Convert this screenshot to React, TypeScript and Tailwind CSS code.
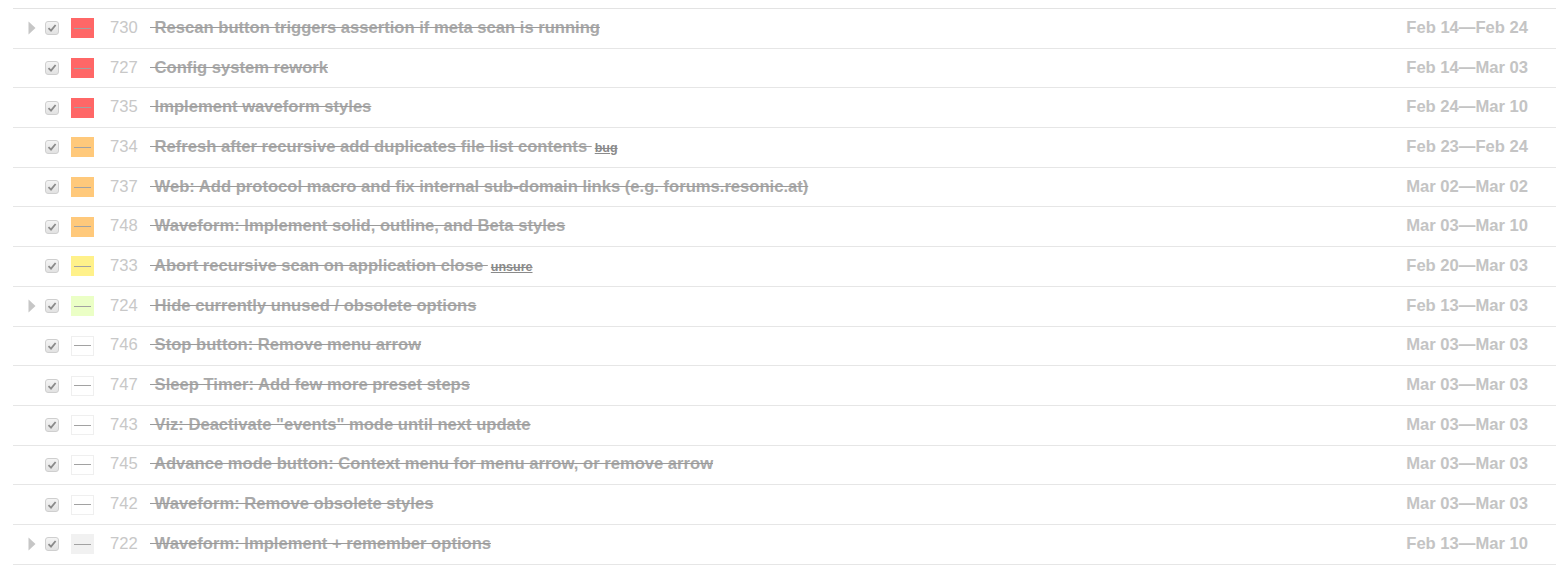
import React from "react";

type Row = {
  arrow: boolean;
  color: string;
  id: number;
  title: string;
  tag?: string;
  date: string;
};

const rows: Row[] = [
  { arrow: true, color: "red", id: 730, title: "Rescan button triggers assertion if meta scan is running", date: "Feb 14\u2014Feb 24" },
  { arrow: false, color: "red", id: 727, title: "Config system rework", date: "Feb 14\u2014Mar 03" },
  { arrow: false, color: "red", id: 735, title: "Implement waveform styles", date: "Feb 24\u2014Mar 10" },
  { arrow: false, color: "orange", id: 734, title: "Refresh after recursive add duplicates file list contents", tag: "bug", date: "Feb 23\u2014Feb 24" },
  { arrow: false, color: "orange", id: 737, title: "Web: Add protocol macro and fix internal sub-domain links (e.g. forums.resonic.at)", date: "Mar 02\u2014Mar 02" },
  { arrow: false, color: "orange", id: 748, title: "Waveform: Implement solid, outline, and Beta styles", date: "Mar 03\u2014Mar 10" },
  { arrow: false, color: "yellow", id: 733, title: "Abort recursive scan on application close", tag: "unsure", date: "Feb 20\u2014Mar 03" },
  { arrow: true, color: "green", id: 724, title: "Hide currently unused / obsolete options", date: "Feb 13\u2014Mar 03" },
  { arrow: false, color: "white", id: 746, title: "Stop button: Remove menu arrow", date: "Mar 03\u2014Mar 03" },
  { arrow: false, color: "white", id: 747, title: "Sleep Timer: Add few more preset steps", date: "Mar 03\u2014Mar 03" },
  { arrow: false, color: "white", id: 743, title: "Viz: Deactivate \"events\" mode until next update", date: "Mar 03\u2014Mar 03" },
  { arrow: false, color: "white", id: 745, title: "Advance mode button: Context menu for menu arrow, or remove arrow", date: "Mar 03\u2014Mar 03" },
  { arrow: false, color: "white", id: 742, title: "Waveform: Remove obsolete styles", date: "Mar 03\u2014Mar 03" },
  { arrow: true, color: "gray", id: 722, title: "Waveform: Implement + remember options", date: "Feb 13\u2014Mar 10" },
];

function ColorBox({ color }: { color: string }) {
  let cls = "";
  if (color === "red") cls = "bg-[#ff6767]";
  else if (color === "orange") cls = "bg-[#ffc97b]";
  else if (color === "yellow") cls = "bg-[#fff18a]";
  else if (color === "green") cls = "bg-[#ebffc6]";
  else if (color === "white") cls = "bg-white border border-[#efefef]";
  else cls = "bg-[#f1f1f1]";
  return (
    <div className={`ml-[12px] flex h-[20px] w-[23px] shrink-0 items-center justify-center ${cls}`}>
      <div className="h-px w-[17px] bg-[#a2a2a2]" />
    </div>
  );
}

function Check() {
  return (
    <div className="flex h-[14px] w-[14px] shrink-0 items-center justify-center rounded-[3px] border border-[#cfcfcf] bg-gradient-to-b from-[#f4f4f4] to-[#e2e2e2]">
      <svg width="10" height="10" viewBox="0 0 10 10">
        <path d="M1.5 5.2 L4 7.6 L8.6 2" fill="none" stroke="#8a8a8a" strokeWidth="1.8" />
      </svg>
    </div>
  );
}

function Arrow() {
  return (
    <svg width="8" height="14" viewBox="0 0 8 14">
      <path d="M0.5 0.5 L7.5 7 L0.5 13.5 Z" fill="#c6c6c6" />
    </svg>
  );
}

export default function App() {
  return (
    <div className="min-h-[577px] bg-white font-['Liberation_Sans',Arial,sans-serif]">
      <div className="pt-[8px] pl-[13px]">
        <div className="w-[1543px] border-t border-[#e3e3e3]">
          {rows.map((r) => (
            <div
              key={r.id}
              className="flex h-[39.7px] items-center border-b border-[#e6e6e6] pl-[15px] pr-[28px]"
            >
              <div className="flex w-[17px] shrink-0 items-center">{r.arrow && <Arrow />}</div>
              <Check />
              <ColorBox color={r.color} />
              <div className="ml-[16px] w-[40px] shrink-0 text-[16.6px] text-[#c8c8c8]">{r.id}</div>
              <div className="flex min-w-0 flex-1 items-baseline whitespace-pre text-[16.6px]">
                <span className="font-bold text-[#a9a9a9] line-through decoration-[#9a9a9a]">{" " + r.title + (r.tag ? " " : "")}</span>
                {r.tag && (
                  <span className="ml-[3px] text-[12.5px] font-bold text-[#8a8a8a] [text-decoration-line:underline_line-through]">{r.tag}</span>
                )}
              </div>
              <div className="shrink-0 text-[16.6px] font-bold text-[#c4c4c4]">{r.date}</div>
            </div>
          ))}
        </div>
      </div>
    </div>
  );
}
